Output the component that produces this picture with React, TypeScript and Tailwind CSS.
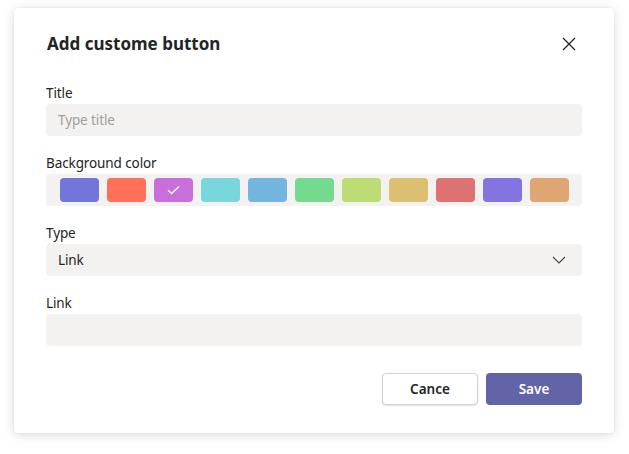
import React from 'react'

const swatches = [
  '#7276d8',
  '#ff7059',
  '#c96fdb',
  '#78d7dc',
  '#73b5dc',
  '#74db8e',
  '#bedc74',
  '#dcc072',
  '#dd7272',
  '#8474df',
  '#dea673',
]

const App = () => {
  return (
    <div className="min-h-[454px] w-[629px] bg-white pt-2 pl-[14px] font-['Noto_Sans',sans-serif] text-[#242424]">
      <div className="w-[600px] rounded bg-white px-8 pt-6 pb-7 shadow-[0_2px_12px_rgba(0,0,0,0.14),0_0_2px_rgba(0,0,0,0.08)]">
        <div className="flex h-6 items-center justify-between">
          <h2 className="pl-px text-[17px] leading-6 font-bold">Add custome button</h2>
          <button className="mr-px flex h-6 w-6 items-center justify-center text-[#242424]">
            <svg width="14" height="14" viewBox="0 0 14 14" fill="none" stroke="currentColor" strokeWidth="1.3">
              <path d="M1 1l12 12M13 1L1 13" />
            </svg>
          </button>
        </div>

        <div className="mt-[27px]">
          <label className="block text-[13.5px] leading-5 tracking-[-0.1px]">Title</label>
          <div className="mt-px flex h-8 items-center rounded bg-[#f3f2f1] px-3 text-[13.5px] tracking-[-0.1px] text-[#a19f9d]">Type title</div>
        </div>

        <div className="mt-[17px]">
          <label className="block text-[13.5px] leading-5 tracking-[-0.1px]">Background color</label>
          <div className="mt-px flex h-8 items-center gap-2 rounded bg-[#f3f2f1] pl-[14px]">
            {swatches.map((c, i) => (
              <div key={c} className="flex h-6 w-[39px] items-center justify-center rounded" style={{ backgroundColor: c }}>
                {i === 2 && (
                  <svg width="13" height="10" viewBox="0 0 13 10" fill="none" stroke="white" strokeWidth="1.4">
                    <path d="M1 5.2l3.6 3.4L12 1.4" />
                  </svg>
                )}
              </div>
            ))}
          </div>
        </div>

        <div className="mt-[17px]">
          <label className="block text-[13.5px] leading-5 tracking-[-0.1px]">Type</label>
          <div className="mt-px flex h-8 items-center justify-between rounded bg-[#f3f2f1] pr-4 pl-3 text-[13.5px] tracking-[-0.1px]">
            <span>Link</span>
            <svg width="14" height="8" viewBox="0 0 14 8" fill="none" stroke="#424242" strokeWidth="1.1">
              <path d="M1 1l6 6 6-6" />
            </svg>
          </div>
        </div>

        <div className="mt-[17px]">
          <label className="block text-[13.5px] leading-5 tracking-[-0.1px]">Link</label>
          <div className="mt-px h-8 rounded bg-[#f3f2f1]"></div>
        </div>

        <div className="mt-[27px] flex justify-end gap-2">
          <button className="h-8 w-24 rounded border border-[#d1d1d1] bg-white text-[13.5px] font-semibold text-[#242424] shadow-[0_1px_2px_rgba(0,0,0,0.12)]">Cance</button>
          <button className="h-8 w-24 rounded bg-[#6264a7] text-[13.5px] font-semibold text-white">Save</button>
        </div>
      </div>
    </div>
  )
}

export default App
